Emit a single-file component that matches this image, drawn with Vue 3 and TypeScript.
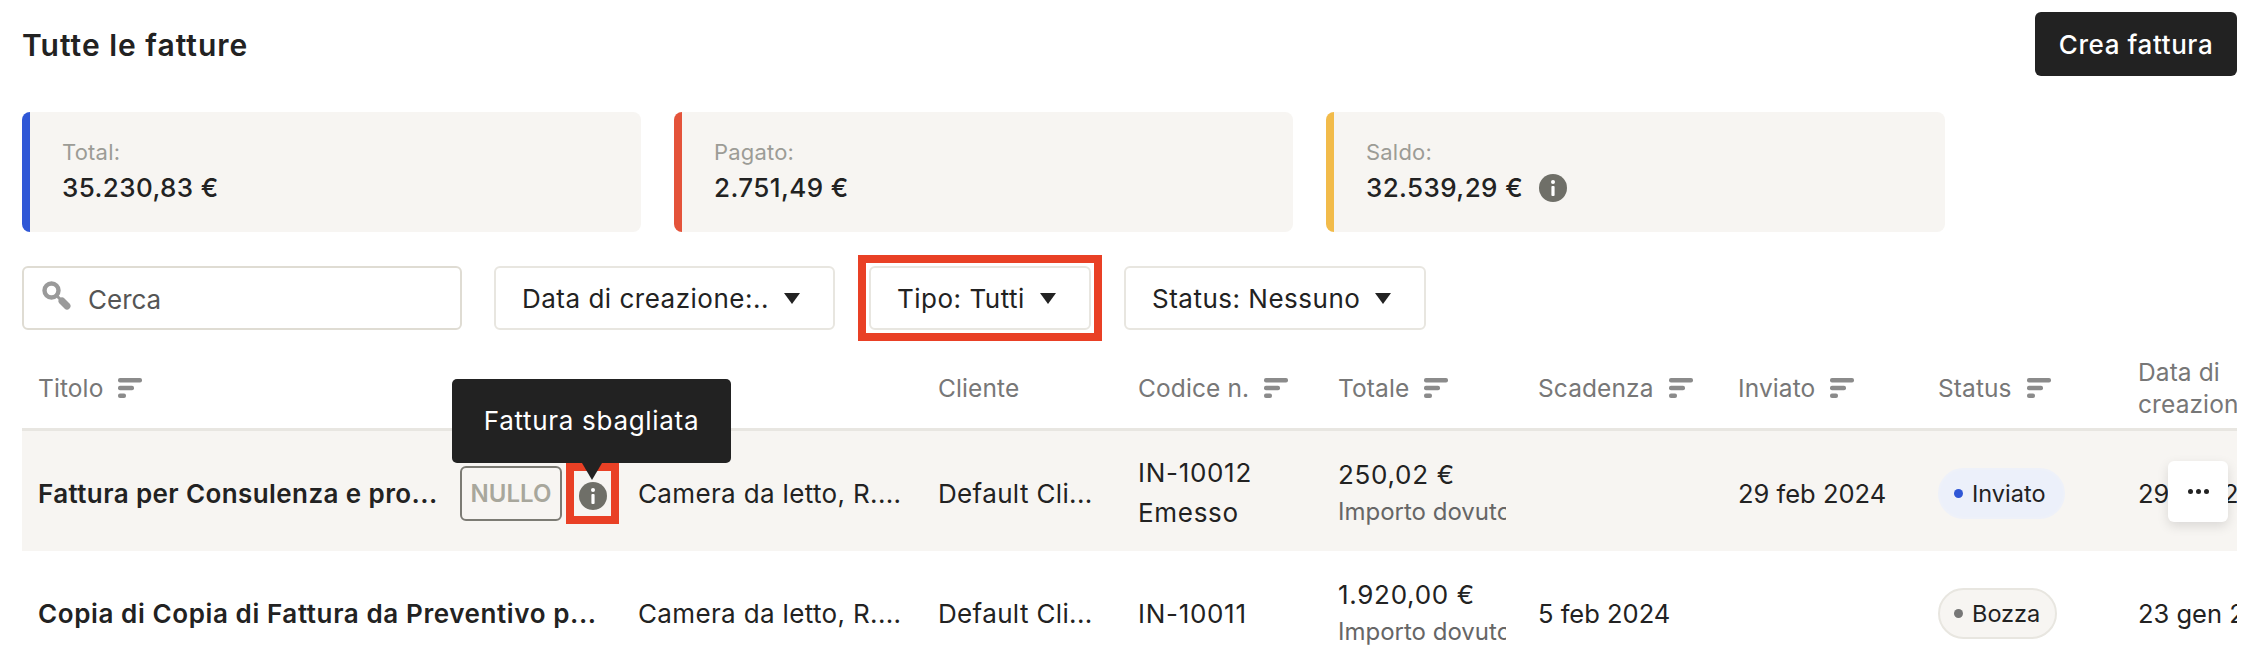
<script setup lang="ts">
interface Stat { label: string; value: string; color: string; info?: boolean }
const stats: Stat[] = [
  { label: 'Total:', value: '35.230,83 €', color: '#2f57d6' },
  { label: 'Pagato:', value: '2.751,49 €', color: '#e4533a' },
  { label: 'Saldo:', value: '32.539,29 €', color: '#f2bb4a', info: true },
]
const columns = [
  { label: 'Titolo', sort: true },
  { label: '', sort: false },
  { label: 'Cliente', sort: false },
  { label: 'Codice n.', sort: true },
  { label: 'Totale', sort: true },
  { label: 'Scadenza', sort: true },
  { label: 'Inviato', sort: true },
  { label: 'Status', sort: true },
  { label: 'Data di creazione', sort: false },
]
</script>

<template>
  <div class="page">
    <header class="top">
      <h1 class="title">Tutte le fatture</h1>
      <button class="create">Crea fattura</button>
    </header>

    <section class="stats">
      <div v-for="s in stats" :key="s.label" class="stat" :style="{ borderLeftColor: s.color }">
        <div class="stat-label">{{ s.label }}</div>
        <div class="stat-value">
          {{ s.value }}
          <svg v-if="s.info" class="info" viewBox="0 0 28 28"><circle cx="14" cy="14" r="14" fill="#6f6f68" /><circle cx="14" cy="8" r="2" fill="#fff" /><rect x="12.4" y="12" width="3.2" height="10" rx="1" fill="#fff" /></svg>
        </div>
      </div>
    </section>

    <section class="filters">
      <div class="search">
        <svg class="search-icon" viewBox="0 0 30 30" fill="none" stroke="#9a9a9a" stroke-linecap="round"><circle cx="9.5" cy="9.5" r="7" stroke-width="4.4" /><path d="M15 15l4 4" stroke-width="3" /><path d="M20 20l5 5" stroke-width="7" /></svg>
        <span>Cerca</span>
      </div>
      <button class="filter date">Data di creazione:.. <i class="caret"></i></button>
      <button class="filter tipo">Tipo: Tutti <i class="caret"></i></button>
      <button class="filter status-f">Status: Nessuno <i class="caret"></i></button>
    </section>

    <section class="table">
      <div class="row head">
        <div v-for="(c, i) in columns" :key="i" class="cell">
          <span class="head-label">{{ c.label }}</span>
          <svg v-if="c.sort" class="sort" viewBox="0 0 24 20" fill="#8b8b8b"><rect width="24" height="4.6" rx="2" /><rect y="7.7" width="16" height="4.6" rx="2" /><rect y="15.4" width="8" height="4.6" rx="2" /></svg>
        </div>
      </div>

      <div class="row body active">
        <div class="cell title-cell">
          <span class="name">Fattura per Consulenza e pro...</span>
          <span class="nullo">NULLO</span>
          <span class="mark">
            <svg class="info" viewBox="0 0 28 28"><circle cx="14" cy="14" r="14" fill="#6f6f68" /><circle cx="14" cy="8" r="2" fill="#fff" /><rect x="12.4" y="12" width="3.2" height="10" rx="1" fill="#fff" /></svg>
            <span class="tooltip">Fattura sbagliata</span>
          </span>
        </div>
        <div class="cell">Camera da letto, R....</div>
        <div class="cell">Default Cli...</div>
        <div class="cell stack code"><span>IN-10012</span><span>Emesso</span></div>
        <div class="cell stack amount"><span>250,02 €</span><small>Importo dovuto</small></div>
        <div class="cell"></div>
        <div class="cell date-cell">29 feb 2024</div>
        <div class="cell"><span class="pill sent"><i></i>Inviato</span></div>
        <div class="cell date-cell">29 feb 2024</div>
        <button class="more" aria-label="Altro"><i></i><i></i><i></i></button>
      </div>

      <div class="row body">
        <div class="cell title-cell"><span class="name long">Copia di Copia di Fattura da Preventivo p...</span></div>
        <div class="cell">Camera da letto, R....</div>
        <div class="cell">Default Cli...</div>
        <div class="cell code">IN-10011</div>
        <div class="cell stack amount"><span>1.920,00 €</span><small>Importo dovuto</small></div>
        <div class="cell date-cell">5 feb 2024</div>
        <div class="cell"></div>
        <div class="cell"><span class="pill draft"><i></i>Bozza</span></div>
        <div class="cell date-cell">23 gen 2024</div>
      </div>
    </section>
  </div>
</template>

<style>
html, body { margin: 0; background: #fff; }
</style>

<style scoped>
.page {
  box-sizing: border-box;
  width: 2262px;
  height: 652px;
  padding: 12px 25px 0 22px;
  overflow: hidden;
  font-family: Inter, "Noto Sans", sans-serif;
  font-size: 26px;
  letter-spacing: .35px;
  color: #222;
}
.top { display: flex; justify-content: space-between; align-items: center; height: 64px; }
.title { margin: 2px 0 0; font-size: 30px; font-weight: 600; letter-spacing: 1px; }
.create {
  width: 202px; height: 64px; border: 0; border-radius: 6px;
  background: #222; color: #fff; font: 500 26px Inter, sans-serif; letter-spacing: .6px;
}
.stats { display: flex; gap: 33px; margin-top: 36px; }
.stat {
  box-sizing: border-box; width: 619px; height: 120px;
  padding: 26px 0 0 32px; background: #f7f5f2;
  border-left: 8px solid; border-radius: 8px;
}
.stat-label { font-size: 22px; line-height: 28px; color: #9c9c96; letter-spacing: .2px; }
.stat-value { display: flex; align-items: center; gap: 16px; margin-top: 6px; line-height: 32px; font-size: 26px; font-weight: 500; letter-spacing: .4px; }
.info { width: 28px; height: 28px; flex: none; }
.filters { display: flex; align-items: center; margin-top: 34px; }
.search {
  box-sizing: border-box; display: flex; align-items: center; gap: 16px;
  width: 440px; height: 64px; padding: 3px 0 0 18px;
  border: 2px solid #dfdcd3; border-radius: 6px; color: #555; font-size: 26px; letter-spacing: 0;
}
.search-icon { width: 30px; height: 30px; margin-top: -7px; }
.filter {
  box-sizing: border-box; display: flex; align-items: center; gap: 15px;
  height: 64px; padding: 0 0 0 26px; background: #fff;
  border: 2px solid #e8e6e0; border-radius: 6px;
  font: 400 26px Inter, sans-serif; letter-spacing: .5px; color: #222; white-space: nowrap;
}
.date { width: 341px; margin-left: 32px; }
.tipo { position: relative; width: 222px; margin-left: 34px; }
.tipo::after {
  content: ""; position: absolute; inset: -13px;
  border: 8px solid #e94025; pointer-events: none;
}
.status-f { width: 302px; margin-left: 33px; }
.caret { width: 0; height: 0; border-left: 8px solid transparent; border-right: 8px solid transparent; border-top: 11px solid #222; }
.table { position: relative; margin-top: 18px; width: 2215px; overflow: hidden; }
.row {
  position: relative; display: grid;
  grid-template-columns: 600px 300px 200px 200px 200px 200px 200px 200px 200px;
  width: 2300px;
}
.head { height: 80px; border-bottom: 3px solid #e8e6e1; align-items: center; }
.head .cell {
  display: flex; align-items: center; gap: 15px;
  color: #777; font-size: 24.5px; letter-spacing: .1px; line-height: 32px; white-space: normal;
}
.head .cell:last-child .head-label { width: 110px; }
.sort { width: 24px; height: 20px; flex: none; }
.body { height: 120px; align-items: center; }
.body .cell { padding-top: 4px; }
.active { background: #f7f5f2; }
.cell { box-sizing: border-box; padding: 0 16px; min-width: 0; white-space: nowrap; }
.name { width: 422px; flex: none; font-weight: 600; letter-spacing: .4px; }
.long { width: auto; letter-spacing: .6px; }
.title-cell { display: flex; align-items: center; }
.nullo {
  box-sizing: border-box; display: flex; align-items: center; justify-content: center;
  width: 102px; height: 55px; flex: none;
  border: 2px solid #7c7b74; border-radius: 6px;
  color: #a8a79c; font-weight: 600; font-size: 24px; letter-spacing: 0;
}
.mark {
  position: relative; box-sizing: border-box; display: flex; justify-content: center; align-items: flex-end;
  width: 53px; height: 61px; margin-left: 4px; padding-bottom: 6px; flex: none;
  border: 8px solid #e94025;
}
.tooltip {
  position: absolute; left: -122px; top: -92px;
  box-sizing: border-box; width: 279px; height: 84px;
  display: flex; align-items: center; justify-content: center;
  background: #222; color: #fff; border-radius: 5px; letter-spacing: .7px;
}
.tooltip::after {
  content: ""; position: absolute; left: 130px; top: 84px;
  border-left: 10px solid transparent; border-right: 10px solid transparent; border-top: 17px solid #222;
}
.stack { display: flex; flex-direction: column; gap: 8px; line-height: 32px; }
.code { letter-spacing: .7px; }
.amount { gap: 5px; overflow: hidden; letter-spacing: .7px; }
.amount small { display: block; width: 168px; overflow: hidden; font-size: 24px; color: #666; letter-spacing: 0; }
.date-cell { font-size: 25.5px; letter-spacing: 0; }
.pill {
  box-sizing: border-box; display: inline-flex; align-items: center; gap: 9px;
  height: 51px; padding: 0 17px 0 14px; border-radius: 26px; font-size: 23.5px; letter-spacing: 0;
}
.pill i { width: 9px; height: 9px; border-radius: 50%; }
.sent { background: #ecf0fa; border: 2px solid #eef1f9; }
.sent i { background: #2f57d6; }
.draft { padding-right: 15px; background: #f7f5f2; border: 2px solid #e8e6e0; }
.draft i { background: #777; }
.more {
  position: absolute; left: 2146px; top: 30px; width: 60px; height: 61px; padding: 0;
  display: flex; align-items: center; justify-content: center; gap: 3px;
  background: #fff; border: 0; border-radius: 6px; box-shadow: 0 4px 12px rgba(0,0,0,.12);
}
.more i { width: 5px; height: 5px; border-radius: 50%; background: #222; }
</style>
